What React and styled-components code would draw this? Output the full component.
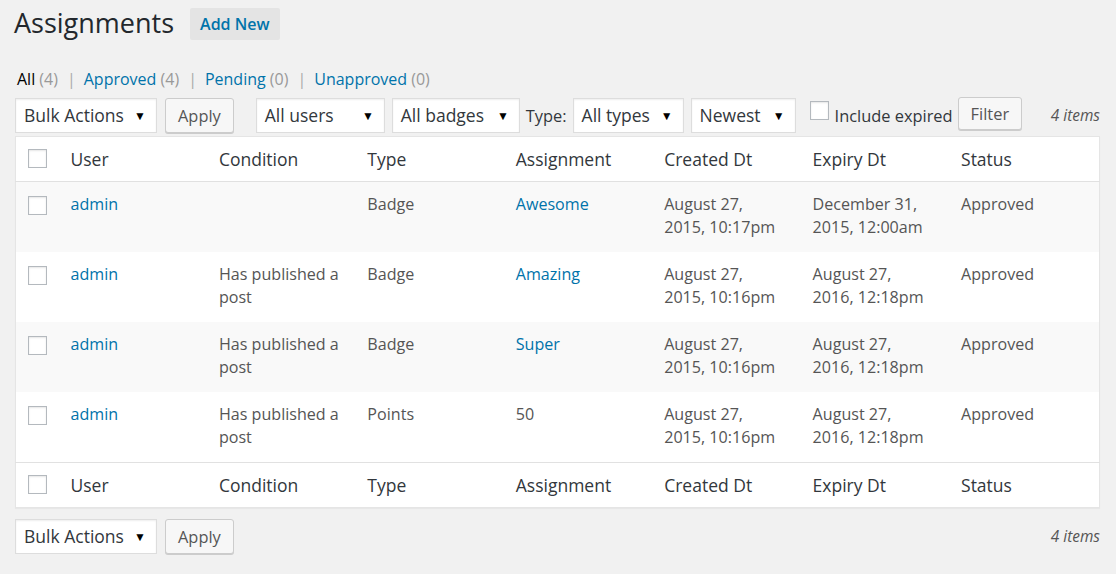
import React from "react";
import styled, { createGlobalStyle } from "styled-components";

const GlobalStyle = createGlobalStyle`
  html, body {
    margin: 0;
    padding: 0;
    background: #f1f1f1;
  }
  body {
    font-family: "Open Sans", "Noto Sans", sans-serif;
    color: #444;
  }
  * { box-sizing: border-box; }
`;

const Wrap = styled.div`
  padding: 0 16px 0 15px;
`;

const TitleRow = styled.div`
  display: flex;
  align-items: center;
  padding-top: 8px;
  height: 32px;
  box-sizing: content-box;
`;

const Title = styled.h1`
  margin: -3px 16px 0 -1px;
  font-size: 27px;
  font-weight: 400;
  line-height: 32px;
  color: #23282d;
`;

const AddNew = styled.a`
  display: inline-block;
  height: 32px;
  line-height: 32px;
  padding: 0 10px;
  background: #e4e4e4;
  border-radius: 2px;
  color: #0073aa;
  font-size: 16px;
  font-weight: 600;
  text-decoration: none;
`;

const Views = styled.ul`
  display: flex;
  list-style: none;
  margin: 27px 0 0 2px;
  padding: 0;
  font-size: 16px;
  line-height: 24px;
  color: #aaa;
`;

const View = styled.li`
  white-space: pre;
`;

const ViewLink = styled.a`
  color: ${(p) => (p.$current ? "#000" : "#0073aa")};
  text-decoration: none;
`;

const Count = styled.span`
  color: #999;
`;

const Sep = styled.span`
  color: #aaa;
  margin: 0 8px 0 9px;
`;

const TableNav = styled.div`
  display: flex;
  align-items: center;
  height: 37px;
  margin: ${(p) => (p.$bottom ? "10px 0 0" : "6px 0 2px")};
  font-size: 16.4px;
`;

const Group = styled.div`
  display: flex;
  align-items: center;
  margin-right: ${(p) => p.$mr || 0}px;
`;

const Select = styled.div`
  display: flex;
  align-items: center;
  justify-content: space-between;
  width: ${(p) => p.$w}px;
  height: 35px;
  margin-left: ${(p) => p.$ml || 0}px;
  padding: 0 10px 1px 8px;
  background: #fff;
  border: 1px solid #ddd;
  box-shadow: inset 0 1px 2px rgba(0, 0, 0, 0.07);
  color: #32373c;
  font-size: 17.5px;
  white-space: nowrap;
`;

const Arrow = styled.span`
  font-size: 12px;
  color: #000;
  margin-top: 1px;
`;

const Button = styled.button`
  height: ${(p) => p.$h || 35}px;
  padding: 0 12px;
  margin-left: ${(p) => p.$ml || 0}px;
  margin-top: ${(p) => p.$mt || 0}px;
  background: #f7f7f7;
  border: 1px solid #ccc;
  border-radius: 3px;
  box-shadow: 0 1px 0 #ccc;
  color: #555;
  font-family: inherit;
  font-size: 16.4px;
`;

const Label = styled.span`
  margin-left: ${(p) => p.$ml || 0}px;
  color: #32373c;
  font-size: 16.4px;
  white-space: nowrap;
`;

const Check = styled.span`
  display: inline-block;
  flex: none;
  width: 19px;
  height: 19px;
  margin-left: ${(p) => p.$ml || 0}px;
  margin-top: ${(p) => p.$mt || 0}px;
  background: #fff;
  border: 1px solid #b4b9be;
  box-shadow: inset 0 1px 2px rgba(0, 0, 0, 0.1);
  vertical-align: top;
`;

const Items = styled.span`
  margin-left: auto;
  font-style: italic;
  color: #555;
  font-size: 15.4px;
`;

const Table = styled.table`
  width: 100%;
  table-layout: fixed;
  border-collapse: collapse;
  background: #fff;
  border: 1px solid #e5e5e5;
  box-shadow: 0 1px 1px rgba(0, 0, 0, 0.04);
`;

const Th = styled.th`
  height: 45px;
  padding: 0 9px 0 10px;
  text-align: left;
  font-weight: 400;
  font-size: 17.5px;
  color: #32373c;
  white-space: nowrap;
  border-bottom: ${(p) => (p.$foot ? "none" : "1px solid #e1e1e1")};
  border-top: ${(p) => (p.$foot ? "1px solid #e1e1e1" : "none")};
`;

const CheckTh = styled(Th)`
  width: 45px;
  padding: 3px 0 0 12px;
`;

const Row = styled.tr`
  background: ${(p) => (p.$alt ? "#f9f9f9" : "#fff")};
`;

const Td = styled.td`
  height: 70px;
  padding: 11px 9px 13px 10px;
  vertical-align: top;
  font-size: 16.1px;
  line-height: 23px;
  color: #555;
`;

const CheckTd = styled(Td)`
  padding: 14px 0 0 12px;
`;

const Link = styled.a`
  color: #0073aa;
  text-decoration: none;
`;

const rows = [
  {
    condition: "",
    type: "Badge",
    assignment: "Awesome",
    link: true,
    created: ["August 27,", "2015, 10:17pm"],
    expiry: ["December 31,", "2015, 12:00am"],
  },
  {
    condition: "Has published a post",
    type: "Badge",
    assignment: "Amazing",
    link: true,
    created: ["August 27,", "2015, 10:16pm"],
    expiry: ["August 27,", "2016, 12:18pm"],
  },
  {
    condition: "Has published a post",
    type: "Badge",
    assignment: "Super",
    link: true,
    created: ["August 27,", "2015, 10:16pm"],
    expiry: ["August 27,", "2016, 12:18pm"],
  },
  {
    condition: "Has published a post",
    type: "Points",
    assignment: "50",
    link: false,
    created: ["August 27,", "2015, 10:16pm"],
    expiry: ["August 27,", "2016, 12:18pm"],
  },
];

const columns = ["User", "Condition", "Type", "Assignment", "Created Dt", "Expiry Dt", "Status"];

const HeadRow = ({ foot }) => (
  <tr>
    <CheckTh $foot={foot}>
      <Check />
    </CheckTh>
    {columns.map((c) => (
      <Th key={c} $foot={foot}>
        {c}
      </Th>
    ))}
  </tr>
);

const BulkActions = () => (
  <Group $mr={22}>
    <Select $w={142}>
      Bulk Actions <Arrow>▼</Arrow>
    </Select>
    <Button $ml={8}>Apply</Button>
  </Group>
);

export default function App() {
  return (
    <Wrap>
      <GlobalStyle />
      <TitleRow>
        <Title>Assignments</Title>
        <AddNew href="#">Add New</AddNew>
      </TitleRow>

      <Views>
        <View>
          <ViewLink $current>All</ViewLink> <Count>(4)</Count>
          <Sep>|</Sep>
        </View>
        <View>
          <ViewLink href="#">Approved</ViewLink> <Count>(4)</Count>
          <Sep>|</Sep>
        </View>
        <View>
          <ViewLink href="#">Pending</ViewLink> <Count>(0)</Count>
          <Sep>|</Sep>
        </View>
        <View>
          <ViewLink href="#">Unapproved</ViewLink> <Count>(0)</Count>
        </View>
      </Views>

      <TableNav>
        <BulkActions />
        <Group>
          <Select $w={129}>
            All users <Arrow>▼</Arrow>
          </Select>
          <Select $w={128} $ml={7}>
            All badges <Arrow>▼</Arrow>
          </Select>
          <Label $ml={6}>Type:</Label>
          <Select $w={111} $ml={6}>
            All types <Arrow>▼</Arrow>
          </Select>
          <Select $w={105} $ml={7}>
            Newest <Arrow>▼</Arrow>
          </Select>
          <Check $ml={14} $mt={-10} />
          <Label $ml={6}>Include expired</Label>
          <Button $ml={5} $h={33} $mt={-4}>
            Filter
          </Button>
        </Group>
        <Items>4 items</Items>
      </TableNav>

      <Table>
        <thead>
          <HeadRow />
        </thead>
        <tbody>
          {rows.map((r, i) => (
            <Row key={i} $alt={i % 2 === 0}>
              <CheckTd>
                <Check />
              </CheckTd>
              <Td>
                <Link href="#">admin</Link>
              </Td>
              <Td>{r.condition}</Td>
              <Td>{r.type}</Td>
              <Td>{r.link ? <Link href="#">{r.assignment}</Link> : r.assignment}</Td>
              <Td>
                {r.created[0]}
                <br />
                {r.created[1]}
              </Td>
              <Td>
                {r.expiry[0]}
                <br />
                {r.expiry[1]}
              </Td>
              <Td>Approved</Td>
            </Row>
          ))}
        </tbody>
        <tfoot>
          <HeadRow foot />
        </tfoot>
      </Table>

      <TableNav $bottom>
        <BulkActions />
        <Items>4 items</Items>
      </TableNav>
    </Wrap>
  );
}
